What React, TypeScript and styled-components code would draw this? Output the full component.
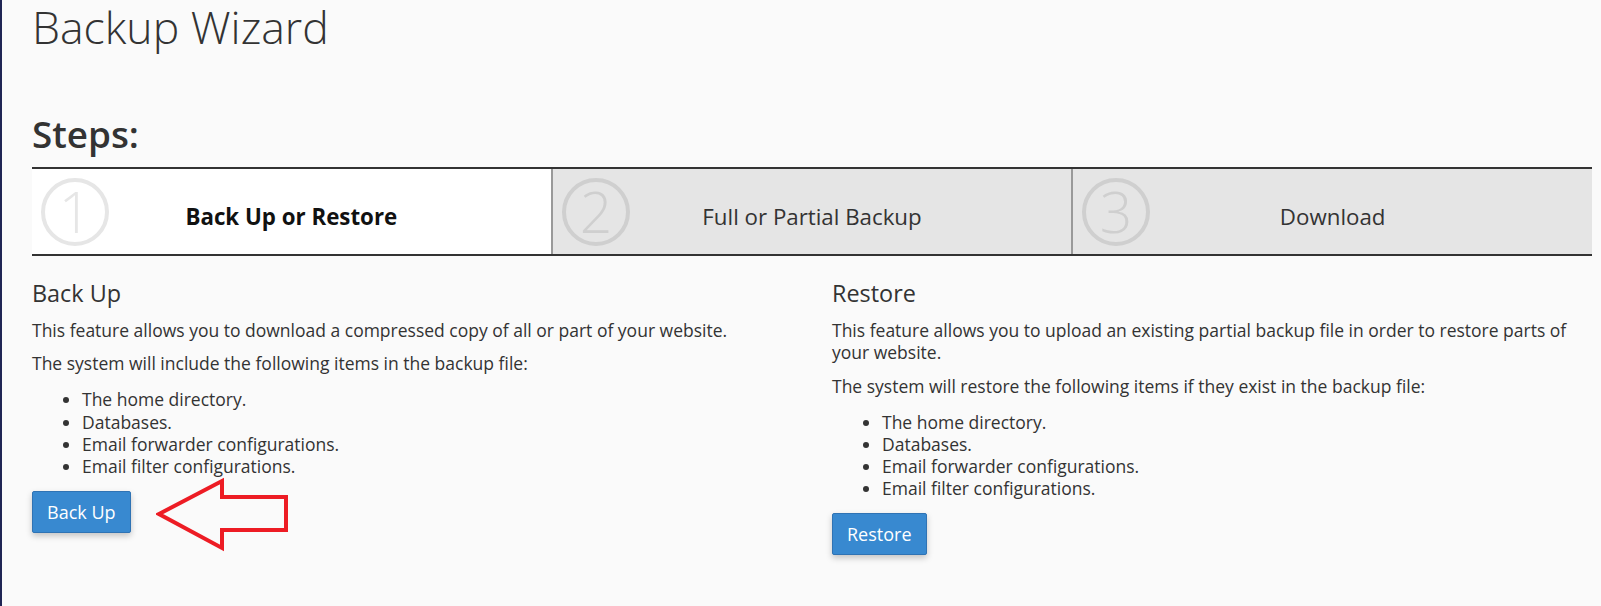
import styled, { createGlobalStyle } from "styled-components";

const GlobalStyle = createGlobalStyle`
  html, body {
    margin: 0;
    padding: 0;
    background: #fafafa;
  }
  body {
    font-family: "Open Sans", "Liberation Sans", sans-serif;
    color: #333;
  }
`;

const steps = [
  { num: "1", label: "Back Up or Restore" },
  { num: "2", label: "Full or Partial Backup" },
  { num: "3", label: "Download" },
];

const items = [
  "The home directory.",
  "Databases.",
  "Email forwarder configurations.",
  "Email filter configurations.",
];

const StepNumber = ({ num, active }: { num: string; active: boolean }) => {
  const color = active ? "#e6e6e6" : "#cfcfcf";
  return (
    <NumberIcon width="70" height="70" viewBox="0 0 70 70">
      <circle cx="35" cy="35" r="32" fill="none" stroke={color} strokeWidth="4" />
      <text
        x="35"
        y="56"
        textAnchor="middle"
        fontFamily="Open Sans, sans-serif"
        fontWeight="300"
        fontSize="57"
        fill={color}
      >
        {num}
      </text>
    </NumberIcon>
  );
};

const RedArrow = () => (
  <ArrowMark width="134" height="75" viewBox="0 0 134 75">
    <polygon
      points="3,37 66,4 66,20 130,20 130,53 66,53 66,71"
      fill="none"
      stroke="#ed1c24"
      strokeWidth="4"
    />
  </ArrowMark>
);

const App = () => {
  return (
    <>
      <GlobalStyle />
      <Page>
        <Title>Backup Wizard</Title>
        <StepsHeading>Steps:</StepsHeading>
        <StepBar>
          {steps.map((s, i) => (
            <Step key={s.num} $active={i === 0} $first={i === 0}>
              <StepNumber num={s.num} active={i === 0} />
              <StepLabel $active={i === 0}>{s.label}</StepLabel>
            </Step>
          ))}
        </StepBar>
        <Columns>
          <Column>
            <SectionTitle>Back Up</SectionTitle>
            <Text>
              This feature allows you to download a compressed copy of all or part of your website.
            </Text>
            <Text>The system will include the following items in the backup file:</Text>
            <ItemList>
              {items.map((it) => (
                <li key={it}>{it}</li>
              ))}
            </ItemList>
            <ButtonWrap>
              <PrimaryButton>Back Up</PrimaryButton>
              <RedArrow />
            </ButtonWrap>
          </Column>
          <Column>
            <SectionTitle>Restore</SectionTitle>
            <Text>
              This feature allows you to upload an existing partial backup file in order to restore
              parts of your website.
            </Text>
            <Text>The system will restore the following items if they exist in the backup file:</Text>
            <ItemList>
              {items.map((it) => (
                <li key={it}>{it}</li>
              ))}
            </ItemList>
            <ButtonWrap>
              <PrimaryButton>Restore</PrimaryButton>
            </ButtonWrap>
          </Column>
        </Columns>
      </Page>
    </>
  );
};

export default App;

const Page = styled.div`
  min-height: 606px;
  box-sizing: border-box;
  border-left: 2px solid #1f2554;
  padding: 0 9px 0 30px;
  overflow: hidden;
`;

const Title = styled.h1`
  margin: -3.6px 0 0;
  font-size: 44.6px;
  font-weight: 300;
  line-height: normal;
  color: #333;
`;

const StepsHeading = styled.h2`
  margin: 56.4px 0 0;
  font-size: 36.8px;
  font-weight: 600;
  line-height: 1.1;
  color: #333;
`;

const StepBar = styled.div`
  margin-top: 13px;
  display: flex;
  border-top: 2px solid #333;
  border-bottom: 2px solid #333;
`;

const Step = styled.div<{ $active: boolean; $first: boolean }>`
  flex: 1;
  height: 85px;
  display: grid;
  align-items: center;
  background: ${(p) => (p.$active ? "#fff" : "#e5e5e5")};
  border-left: ${(p) => (p.$first ? "none" : "2px solid #999")};
`;

const NumberIcon = styled.svg`
  grid-area: 1 / 1;
  justify-self: start;
  margin-left: 8px;
  overflow: visible;
`;

const StepLabel = styled.div<{ $active: boolean }>`
  grid-area: 1 / 1;
  justify-self: center;
  padding-top: 9px;
  font-size: 22.3px;
  font-weight: ${(p) => (p.$active ? 700 : 400)};
  color: ${(p) => (p.$active ? "#111" : "#333")};
`;

const Columns = styled.div`
  display: grid;
  grid-template-columns: 1fr 1fr;
  column-gap: 40px;
  margin-top: 25px;
`;

const Column = styled.div`
  min-width: 0;
`;

const SectionTitle = styled.h3`
  margin: 0 0 12px;
  font-size: 23.4px;
  font-weight: 400;
  line-height: 1.1;
  color: #333;
`;

const Text = styled.p`
  margin: 0 0 11px;
  font-size: 17.5px;
  line-height: 22.3px;
`;

const ItemList = styled.ul`
  margin: 13.7px 0 13.5px;
  padding-left: 50px;
  font-size: 17.5px;
  line-height: 22.3px;
`;

const ButtonWrap = styled.div`
  position: relative;
  display: inline-block;
`;

const PrimaryButton = styled.button`
  font-family: "Open Sans", "Liberation Sans", sans-serif;
  font-size: 18px;
  line-height: 24px;
  padding: 8px 14px;
  color: #fff;
  background: #3889d0;
  border: 1px solid #2f73b4;
  border-radius: 2px;
  box-shadow: 0 3px 6px rgba(0, 0, 0, 0.22);
  cursor: pointer;
`;

const ArrowMark = styled.svg`
  position: absolute;
  left: 124px;
  top: -14px;
`;
